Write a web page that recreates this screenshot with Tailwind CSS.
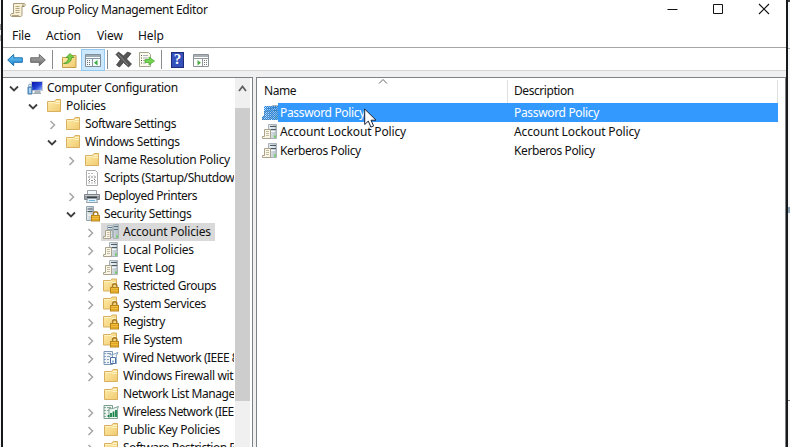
<!DOCTYPE html>
<html lang="en">
<head>
<meta charset="utf-8">
<title>Group Policy Management Editor</title>
<script src="https://cdn.jsdelivr.net/npm/@tailwindcss/browser@4"></script>
</head>
<body class="h-[447px] w-[790px] overflow-hidden bg-[#f6f6f6] font-['Noto_Sans','Open_Sans',sans-serif] text-[12px] text-[#111]">
<svg class="absolute size-0">
  <defs>
    <linearGradient id="gold" x1="0" y1="0" x2="1" y2="1"><stop offset="0" stop-color="#ffedaa"/><stop offset="1" stop-color="#f0ca70"/></linearGradient>
    <linearGradient id="sky" x1="0" y1="0" x2="0" y2="1"><stop offset="0" stop-color="#7cd0f5"/><stop offset="1" stop-color="#1681d2"/></linearGradient>
    <linearGradient id="steel" x1="0" y1="0" x2="0" y2="1"><stop offset="0" stop-color="#b5b5b5"/><stop offset="1" stop-color="#696969"/></linearGradient>
    <linearGradient id="screen" x1="0" y1="0" x2="1" y2="1"><stop offset="0" stop-color="#0711a8"/><stop offset=".55" stop-color="#2242d6"/><stop offset="1" stop-color="#a8c4ff"/></linearGradient>
    <linearGradient id="tower" x1="0" y1="0" x2="1" y2="0"><stop offset="0" stop-color="#e6edf0"/><stop offset="1" stop-color="#b3bec4"/></linearGradient>
    <pattern id="dots" width="2" height="2" patternUnits="userSpaceOnUse"><path d="M0 0h1v1H0zM1 1h1v1H1z" fill="#1e86e8"/></pattern>
  </defs>
  <symbol id="open" viewBox="0 0 16 16"><path d="M4 6.500l4 4 4-4" fill="none" stroke="#404040" stroke-width="1.8"/></symbol>
  <symbol id="shut" viewBox="0 0 16 16"><path d="M6.500 5l4 4-4 4" fill="none" stroke="#a6a6a6" stroke-width="1.5"/></symbol>
  <symbol id="folder" viewBox="0 0 16 16"><path d="M1.500 3.500h7l1.500-2h4.500v12h-13z" fill="url(#gold)" stroke="#d8b060"/><path d="M10 3.500h4" stroke="#fff6d0"/><path d="M2 4.500h6.500l1.500 1h4" fill="none" stroke="#fff3c4"/></symbol>
  <symbol id="lock" viewBox="0 0 16 16"><path d="M9.500 10V8a2.200 2.200 0 0 1 4.400 0v2" fill="none" stroke="#a67b24" stroke-width="1.400"/><rect x="7.500" y="9.500" width="8" height="5.500" fill="#f2bd38" stroke="#b98419"/><path d="M8 11.500h7M8 13.500h7" stroke="#cf9521" stroke-width=".6"/></symbol>
  <symbol id="lockfolder" viewBox="0 0 16 16"><path d="M.500 2.500h7l1.500-1.500h4.500v12h-13z" fill="url(#gold)" stroke="#d8b060"/><path d="M1 3.500h7l1 1h4" fill="none" stroke="#fff3c4"/><use href="#lock"/></symbol>
  <symbol id="secure" viewBox="0 0 16 16"><path d="M2.500.500h7v14h-7z" fill="url(#tower)" stroke="#95a3ab"/><path d="M3.500 3h5M3.500 5.500h5" stroke="#4b5b64"/><path d="M4 9h3" stroke="#fff"/><use href="#lock"/></symbol>
  <symbol id="server" viewBox="0 0 16 16"><path d="M6.500.500h8v14h-8z" fill="url(#tower)" stroke="#a9b4ba"/><path d="M8 2.500h6M8 5.500h6" stroke="#4c5b64"/><path d="M8 4h5M9 7.500h4" stroke="#f6fafc"/><path d="M12 12.500h2" stroke="#6cd05c" stroke-width="2"/><path d="M2.500 5.500h6v9h-8v-2h2z" fill="#faf6e8" stroke="#aaa28c"/><path d="M4 7.500h3M4 9.500h3M4 11.500h3" stroke="#c3baa2"/></symbol>
  <symbol id="account" viewBox="0 0 16 16"><path d="M4.500 1.500h5v12h-5zM10.500.500h5v14h-5z" fill="url(#tower)" stroke="#a9b4ba"/><path d="M5 3.500h4M11 2.500h4M5 6h4M11 5.500h4" stroke="#587383"/><path d="M13 12.500h2" stroke="#6cd05c" stroke-width="2"/><path d="M2.500 6.500h5v8h-7v-2h2z" fill="#faf6e8" stroke="#aaa28c"/><path d="M4 8.500h2.500M4 10.500h2.500M4 12.500h2.500" stroke="#c3baa2"/></symbol>
  <symbol id="selected-account" viewBox="0 0 16 16"><use href="#account"/><path d="M2 1h14v14H0v-3l2-2z" fill="#3399ff" fill-opacity=".25"/><path d="M2 1h14v14H0v-3l2-2z" fill="url(#dots)"/></symbol>
  <symbol id="computer" viewBox="0 0 16 16"><path d="M4.500 1.500h11v9h-11z" fill="url(#screen)" stroke="#c4ccd6"/><path d="M8 11h5v2H8zM6 13.500h8" fill="#b8c0c7" stroke="#a1abb4"/><path d="M1 7h4v7H1z" fill="#6eace2" stroke="#4c7aa5"/><circle cx="3" cy="5.500" r="1.500" fill="#d5e6f4" stroke="#678aab" stroke-width=".7"/><path d="M3 8v5" stroke="#e9f8ff"/></symbol>
  <symbol id="script" viewBox="0 0 16 16"><path d="M2.500.500h9l2 2v13h-11z" fill="#fff" stroke="#ababab"/><path d="M4 3.500h6M4 13h8" stroke="#bbb" stroke-dasharray="2 1"/><path d="M6 5.500l-1.500 1.500 1.500 1.500M10 5.500l1.500 1.500-1.500 1.500M7 7h2M6 9l-1.500 1.500 1.500 1.500M10 9l1.500 1.500-1.500 1.500M7 10.500h2" fill="none" stroke="#777" stroke-width=".9"/></symbol>
  <symbol id="printer" viewBox="0 0 16 16"><path d="M3.500 2.500h9v4h-9z" fill="#f3f8fb" stroke="#9aa4ac"/><path d="M.500 6.500h15v5H.500z" fill="#9a9fa4" stroke="#7c8288"/><path d="M1 7.500h14" stroke="#c6cbd0"/><path d="M3 9.500h10" stroke="#3c4044" stroke-width="2"/><path d="M3.500 10.500h9l1 4h-11z" fill="#e0eff8" stroke="#92a1ab"/><path d="M5 12.500h6" stroke="#6cb5dd"/></symbol>
  <symbol id="wired" viewBox="0 0 16 16"><path d="M1 1.500h8.500v13H1z" fill="#eef4fa" stroke="#7d98b5"/><path d="M1.500 3.500h1M1.500 6.500h1M1.500 9.500h1M1.500 12.500h1" stroke="#3869a5"/><path d="M4 3.500h4M4 6.500h3M4 9.500h2M4 12.500h2" stroke="#8ca0b7"/><path d="M6.500 4.500c3 1 5-1 8.500-2-1 2-2 3-1.500 4" fill="#e9f2fb" stroke="#7d98b5"/><path d="M7.500 7.500h5v6h-5z" fill="#fff" stroke="#476fa5"/><path d="M9 10.500h2v2H9z" fill="#8eb0db"/><path d="M13.500 5v9" stroke="#9cb2ca"/></symbol>
  <symbol id="wireless" viewBox="0 0 16 16"><path d="M1 1.500h8.500v13H1z" fill="#eef5f1" stroke="#7d9f92"/><path d="M1.500 3.500h1M1.500 6.500h1M1.500 9.500h1M1.500 12.500h1" stroke="#30795b"/><path d="M4 3.500h4M4 6.500h3" stroke="#8da99d"/><path d="M6 4.500c3 1 6-1 9.500-2-1 2-1 3-1 4v8H6z" fill="#edf6f1" stroke="#7d9f92"/><path d="M5.500 13v-2M8 13v-4M10.500 13V7.500M13 13V6" stroke="#168346" stroke-width="1.800"/></symbol>
</svg>

<div class="flex h-full">
  <div class="flex w-[1px] shrink-0 flex-col pt-[24px]"><i class="h-[6px] bg-[#999]"></i><i class="mt-[5px] h-[6px] bg-[#aaa]"></i></div>
  <main class="flex w-[787px] shrink-0 flex-col border-x-2 border-x-[#15191c] bg-white">
    <header class="flex h-[22px] shrink-0 items-center">
      <svg class="ml-[7px] mb-[3px] size-4" viewBox="0 0 16 16"><path d="M3.500 1.500h11c1 0 1 3-.5 3h-2v8c0 2-1 2-2 2h-8c-2 0-2-3 0-3h1.500z" fill="#f8f0d7" stroke="#a79a79"/><path d="M5.500 4.500h4M5.500 6.500h4M5.500 8.500h4M5.500 10.500h4M2 13.500h7" stroke="#b6a783"/><path d="M13 2.500v2" stroke="#7c6c4b"/></svg>
      <h1 class="mb-[2px] ml-[5px] whitespace-nowrap leading-4 tracking-[-0.34px]">Group Policy Management Editor</h1>
      <div class="mr-[16px] mb-[4px] ml-auto flex items-center gap-[34px]">
        <svg class="size-3" viewBox="0 0 12 12"><path d="M1.500 6.500h10" stroke="#111"/></svg>
        <svg class="size-3" viewBox="0 0 12 12"><path d="M1.500 1.500h9v9h-9z" fill="none" stroke="#111"/></svg>
        <svg class="size-3" viewBox="0 0 12 12"><path d="M1 1l10 10M11 1L1 11" stroke="#111" stroke-width="1.100"/></svg>
      </div>
    </header>
    <nav class="flex h-[26px] shrink-0 items-center border-b border-[#a5a5a5] pt-[3px] pl-[9px] leading-4 tracking-[-0.1px]">
      <span class="w-[34px]">File</span><span class="w-[51px]">Action</span><span class="w-[41px]">View</span><span>Help</span>
    </nav>
    <div class="flex h-[23px] shrink-0 items-center border-b border-[#d5d5d5] pt-px pl-[4px]">
      <svg class="h-4 w-4" viewBox="0 0 16 16"><path d="M.7 8l6-5.500v3.300h8.600v4.500H6.700v3.300z" fill="url(#sky)" stroke="#196fae"/></svg>
      <svg class="ml-[7px] h-4 w-4" viewBox="0 0 16 16"><path d="M15.300 8l-6-5.500v3.300H.7v4.500h8.600v3.300z" fill="url(#steel)" stroke="#666"/></svg>
      <i class="ml-[6px] h-[19px] w-px bg-[#8b8b8b]"></i>
      <svg class="ml-[9px] mt-[2px] size-4" viewBox="0 0 16 16"><path d="M.500 4.500h6l2-2h5.500v12H.500z" fill="url(#gold)" stroke="#c79d4a"/><path d="M1.500 10.500C5 9.500 6.500 7.500 6.500 4.500H4l4-4 4 4H9.500c0 4-3 6.500-8 6z" fill="#77cf46" stroke="#4c9b2d" stroke-width=".8"/></svg>
      <div class="ml-[3px] flex h-[22px] w-[24px] items-center justify-center border border-[#92c7ee] bg-[#cce8ff] pt-[2px]">
        <svg class="size-4" viewBox="0 0 16 16"><path d="M.500 1.500h15v12H.500z" fill="#f7fafb" stroke="#7f8f9a"/><path d="M1 3h14" stroke="#9caab3" stroke-width="2"/><path d="M1 5.500h14M7.500 6v7" stroke="#8597a4"/><path d="M2 7.500h4M2 9.500h4M2 11.500h4" stroke="#66747e" stroke-dasharray="1 1"/><path d="M12.500 7v5.500L9 9.700z" fill="#37ad40"/></svg>
      </div>
      <i class="ml-[2px] h-[19px] w-px bg-[#8b8b8b]"></i>
      <svg class="ml-[7px] size-[17px]" viewBox="0 0 17 17"><path d="M1 3.500L3.500 1l5 4 4-4L16 2.500l-4.500 5.500 5 5-3 3-5-4.500-4 4.500-3-2 4-5.500z" fill="#565656" stroke="#303030" stroke-width=".7"/><path d="M3 3l10 11" stroke="#8b8b8b"/></svg>
      <svg class="ml-[7px] size-4" viewBox="0 0 16 16"><path d="M.500.500h9l2 2v12H.500z" fill="#fcfbed" stroke="#a6a58c"/><path d="M2 3.500h1M2 6h1M2 8.500h1M2 11h1" stroke="#50545a"/><path d="M4 3.500h5M4 6h5M4 8.500h3M4 11h3" stroke="#abb0b4"/><path d="M6 7.500h4V5l5.500 4-5.500 4v-2.500H6z" fill="#75d44f" stroke="#41a52c" stroke-width=".7"/></svg>
      <i class="ml-[6px] h-[19px] w-px bg-[#8b8b8b]"></i>
      <div class="ml-[9px] flex h-[16px] w-[13px] items-center justify-center border border-[#1d2b78] bg-[#3451bc] font-['Liberation_Serif',serif] text-[15px] font-bold leading-none text-white">?</div>
      <svg class="ml-[9px] mt-[2px] size-4" viewBox="0 0 16 16"><path d="M.500 1.500h15v12H.500z" fill="#fff" stroke="#8b9297"/><path d="M1 3h14" stroke="#a9afb3" stroke-width="2"/><path d="M1 5.500h14M9.500 6v7" stroke="#92999e"/><path d="M11 7.500h4M11 9.500h4M11 11.500h4" stroke="#777" stroke-dasharray="1 1"/><path d="M4.500 7v5.500L8 9.700z" fill="#4cac43"/></svg>
    </div>
    <div class="flex min-h-0 flex-1 bg-[#f0f0f0] pt-[6px]">
      <section class="flex w-[250px] shrink-0 border-t border-r border-[#7d8287] bg-white">
        <div class="w-[231px] mr-px shrink-0 overflow-hidden whitespace-nowrap pt-px leading-[18px] [&>div]:flex [&>div]:h-[18px] [&>div]:items-center [&_svg]:size-4 [&_svg]:shrink-0 [&_span]:ml-1 [&_svg+svg]:ml-[5px] [&_b]:ml-[21px] [&_b]:flex">
          <div class="pl-[3px]"><svg><use href="#open"/></svg><svg><use href="#computer"/></svg><span class="tracking-[-0.32px]">Computer Configuration</span></div>
          <div class="pl-[22px]"><svg><use href="#open"/></svg><svg><use href="#folder"/></svg><span class="tracking-[-0.3px]">Policies</span></div>
          <div class="pl-[41px]"><svg><use href="#shut"/></svg><svg><use href="#folder"/></svg><span class="tracking-[-0.46px]">Software Settings</span></div>
          <div class="pl-[41px]"><svg><use href="#open"/></svg><svg><use href="#folder"/></svg><span class="tracking-[-0.33px]">Windows Settings</span></div>
          <div class="pl-[60px]"><svg><use href="#shut"/></svg><svg><use href="#folder"/></svg><span class="tracking-[-0.3px]">Name Resolution Policy</span></div>
          <div class="pl-[60px]"><b><svg><use href="#script"/></svg></b><span class="tracking-[-0.42px]">Scripts (Startup/Shutdow</span></div>
          <div class="pl-[60px]"><svg><use href="#shut"/></svg><svg><use href="#printer"/></svg><span class="tracking-[-0.46px]">Deployed Printers</span></div>
          <div class="pl-[60px]"><svg><use href="#open"/></svg><svg><use href="#secure"/></svg><span class="tracking-[-0.38px]">Security Settings</span></div>
          <div class="pl-[79px]"><svg><use href="#shut"/></svg><p class="ml-[3px] flex h-[18px] w-[114px] items-center bg-[#d9d9d9] pl-[2px]"><svg><use href="#account"/></svg><span class="tracking-[-0.19px]">Account Policies</span></p></div>
          <div class="pl-[79px]"><svg><use href="#shut"/></svg><svg><use href="#server"/></svg><span class="tracking-[-0.25px]">Local Policies</span></div>
          <div class="pl-[79px]"><svg><use href="#shut"/></svg><svg><use href="#server"/></svg><span class="tracking-[-0.4px]">Event Log</span></div>
          <div class="pl-[79px]"><svg><use href="#shut"/></svg><svg><use href="#lockfolder"/></svg><span class="tracking-[-0.46px]">Restricted Groups</span></div>
          <div class="pl-[79px]"><svg><use href="#shut"/></svg><svg><use href="#lockfolder"/></svg><span class="tracking-[-0.46px]">System Services</span></div>
          <div class="pl-[79px]"><svg><use href="#shut"/></svg><svg><use href="#lockfolder"/></svg><span class="tracking-[-0.5px]">Registry</span></div>
          <div class="pl-[79px]"><svg><use href="#shut"/></svg><svg><use href="#lockfolder"/></svg><span class="tracking-[-0.36px]">File System</span></div>
          <div class="pl-[79px]"><svg><use href="#shut"/></svg><svg><use href="#wired"/></svg><span class="tracking-[-0.48px]">Wired Network (IEEE 8</span></div>
          <div class="pl-[79px]"><svg><use href="#shut"/></svg><svg><use href="#folder"/></svg><span class="tracking-[-0.35px]">Windows Firewall wit</span></div>
          <div class="pl-[79px]"><b><svg><use href="#folder"/></svg></b><span class="tracking-[-0.42px]">Network List Manage</span></div>
          <div class="pl-[79px]"><svg><use href="#shut"/></svg><svg><use href="#wireless"/></svg><span class="tracking-[-0.57px]">Wireless Network (IEE</span></div>
          <div class="pl-[79px]"><svg><use href="#shut"/></svg><svg><use href="#folder"/></svg><span class="tracking-[-0.28px]">Public Key Policies</span></div>
          <div class="pl-[79px]"><svg><use href="#shut"/></svg><svg><use href="#folder"/></svg><span class="tracking-[-0.48px]">Software Restriction P</span></div>
        </div>
        <div class="flex w-[15px] flex-col bg-[#f0f0f0]">
          <svg class="h-[30px] w-[15px] shrink-0" viewBox="0 0 15 30"><path d="M4 13l3.500-4.500L11 13" fill="none" stroke="#606060" stroke-width="1.800"/></svg>
          <i class="h-[293px] shrink-0 bg-[#cdcdcd]"></i>
        </div>
      </section>
      <section class="ml-[3px] flex-1 border-t border-l border-r border-[#7d8287] bg-white">
        <div class="relative flex h-[25px] items-end leading-4">
          <svg class="absolute top-[1px] left-[121px] h-[5px] w-[10px]" viewBox="0 0 10 5"><path d="M1 4.500l4-4 4 4" fill="none" stroke="#666"/></svg>
          <div class="h-[23px] w-[251px] border-r border-[#e0e0e0] pt-[3px] pl-[7px] tracking-[-0.4px]">Name</div>
          <div class="h-[23px] w-[270px] border-r border-[#e0e0e0] pt-[3px] pl-[6px] tracking-[-0.43px]">Description</div>
        </div>
        <div class="w-[521px] leading-[19px] [&_svg]:size-4 [&>div]:flex [&>div]:h-[19px] [&>div]:items-center [&>div]:pl-[5px]">
          <div class="relative text-white tracking-[-0.33px]"><svg><use href="#selected-account"/></svg><span class="flex flex-1 bg-[#3399ff]"><span class="w-[236px] pl-[2px]">Password Policy</span><span>Password Policy</span></span>
            <svg class="absolute top-[5px] left-[107px] !h-[20px] !w-[13px]" viewBox="0 0 13 20"><path d="M.700 1v15.500l3.600-3.400 2.600 6 2.700-1.200-2.600-5.700h5z" fill="#fff" stroke="#1b2233"/></svg>
          </div>
          <div class="tracking-[-0.14px]"><svg><use href="#server"/></svg><span class="w-[236px] pl-[2px]">Account Lockout Policy</span><span>Account Lockout Policy</span></div>
          <div class="tracking-[-0.4px]"><svg><use href="#server"/></svg><span class="w-[236px] pl-[2px]">Kerberos Policy</span><span>Kerberos Policy</span></div>
        </div>
      </section>
    </div>
  </main>
  <aside class="flex flex-1 flex-col"><i class="h-[2px] bg-[#444]"></i><i class="mt-[46px] h-px bg-[#aaa]"></i><i class="mt-[158px] h-[6px] bg-[#8fa6b8]"></i><i class="mt-[187px] h-px bg-[#777]"></i></aside>
</div>
</body>
</html>
